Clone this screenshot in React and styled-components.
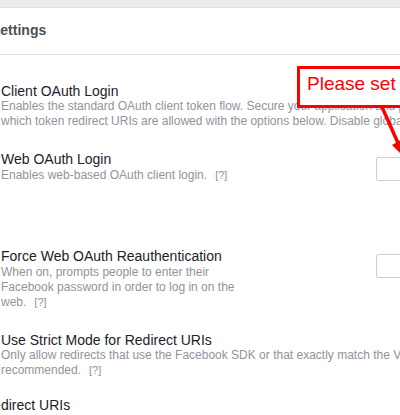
import styled, { createGlobalStyle } from 'styled-components';

const GlobalStyle = createGlobalStyle`
  body {
    margin: 0;
    background: #e9ebee;
    font-family: "Liberation Sans", Arial, Helvetica, sans-serif;
  }
`

// rows of the oauth settings panel
// wide rows (no toggle) keep their own line breaks, the panel runs past the crop
const rows = [
  {
    title: 'Client OAuth Login',
    lines: [
      'Enables the standard OAuth client token flow. Secure your application and prevent abuse by locking down',
      'which token redirect URIs are allowed with the options below. Disable globally if not used.',
    ],
    top: 28,
  },
  {
    title: 'Web OAuth Login',
    desc: 'Enables web-based OAuth client login.',
    help: true,
    toggle: true,
    top: 22,
  },
  {
    title: 'Force Web OAuth Reauthentication',
    desc: 'When on, prompts people to enter their Facebook password in order to log in on the web.',
    help: true,
    toggle: true,
    top: 65,
  },
  {
    title: 'Use Strict Mode for Redirect URIs',
    lines: [
      'Only allow redirects that use the Facebook SDK or that exactly match the Valid OAuth Redirect URIs. Strongly',
      'recommended.',
    ],
    help: true,
    top: 22,
  },
]

const App = () => {
  return (
    <Page>
      <GlobalStyle />
      <Panel>
        <PanelHeader>Settings</PanelHeader>
        <PanelBody>
          {rows.map((row) => (
            <SettingRow key={row.title} $top={row.top} $toggle={row.toggle}>
              <SettingText $narrow={row.toggle}>
                <SettingTitle>{row.title}</SettingTitle>
                {row.lines ? (
                  row.lines.map((line, i) => (
                    <DescLine key={i}>
                      {line}
                      {row.help && i === row.lines.length - 1 && <Help>[?]</Help>}
                    </DescLine>
                  ))
                ) : (
                  <SettingDesc>
                    {row.desc}
                    {row.help && <Help>[?]</Help>}
                  </SettingDesc>
                )}
              </SettingText>
              {row.toggle && <Toggle />}
            </SettingRow>
          ))}
          <SettingRow $top={19}>
            <SettingTitle $shift={-18}>Redirect URIs</SettingTitle>
          </SettingRow>
        </PanelBody>
      </Panel>
      <Callout>Please set</Callout>
      <Arrow viewBox="0 0 40 60" width="40" height="60">
        <path d="M10 0 L26 36" stroke="#ff0000" strokeWidth="3.5" fill="none" />
        <polygon points="20,38 34,30 34,52" fill="#ff0000" />
      </Arrow>
    </Page>
  );
}

const Page = styled.div`
  position: relative;
  width: 400px;
  height: 415px;
  overflow: hidden;
  padding-top: 7px;
  box-sizing: border-box;
`
const Panel = styled.div`
  background: #fff;
  border-top: 1px solid #dddfe2;
  height: 100%;
`
const PanelHeader = styled.div`
  height: 47px;
  box-sizing: border-box;
  padding-top: 14px;
  margin-left: -9px;
  font-size: 14px;
  line-height: 16px;
  font-weight: bold;
  color: #4b4f56;
  border-bottom: 1px solid #dddfe2;
`
const PanelBody = styled.div`
  display: flex;
  flex-direction: column;
  padding-left: 1px;
`
const SettingRow = styled.div`
  display: grid;
  grid-template-columns: ${(p) => (p.$toggle ? '375px 40px' : '1fr')};
  margin-top: ${(p) => p.$top}px;
`
const SettingText = styled.div`
  max-width: ${(p) => (p.$narrow ? '240px' : 'none')};
`
const SettingTitle = styled.div`
  font-size: 14px;
  line-height: 16px;
  color: #1d2129;
  white-space: nowrap;
  margin-left: ${(p) => p.$shift || 0}px;
`
const SettingDesc = styled.div`
  margin-top: 1px;
  font-size: 12px;
  line-height: 15px;
  color: #90949c;
`
const DescLine = styled.div`
  font-size: 12px;
  line-height: 15px;
  color: #90949c;
  white-space: nowrap;
  &:first-of-type {
    margin-top: 1px;
  }
`
const Help = styled.span`
  margin-left: 8px;
  color: #90949c;
  font-size: 11px;
`
const Toggle = styled.div`
  margin-top: 6px;
  width: 40px;
  height: 24px;
  box-sizing: border-box;
  border: 1px solid #ccd0d5;
  border-radius: 2px;
  background: #fff;
`
const Callout = styled.div`
  position: absolute;
  left: 297px;
  top: 66px;
  width: 140px;
  height: 42px;
  box-sizing: border-box;
  border: 3px solid #ff0000;
  background: #fff;
  padding: 4px 0 0 7px;
  font-size: 19px;
  line-height: 22px;
  color: #ff0000;
`
const Arrow = styled.svg`
  position: absolute;
  left: 372px;
  top: 107px;
`

export default App;
